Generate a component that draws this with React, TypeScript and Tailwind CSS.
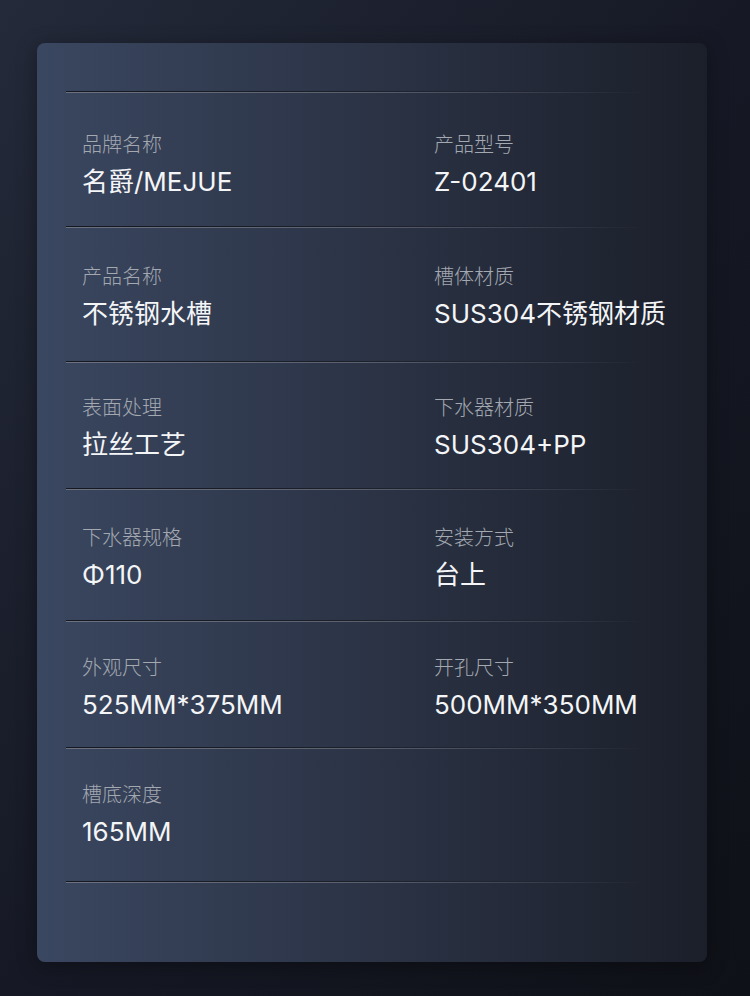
const rows = [
  { pad: 'pt-[40px] h-[133px]', items: [['品牌名称', '名爵/MEJUE'], ['产品型号', 'Z-02401']] },
  { pad: 'pt-[37px] h-[133px]', items: [['产品名称', '不锈钢水槽'], ['槽体材质', 'SUS304不锈钢材质']] },
  { pad: 'pt-[33px] h-[125px]', items: [['表面处理', '拉丝工艺'], ['下水器材质', 'SUS304+PP']] },
  { pad: 'pt-[36px] h-[130px]', items: [['下水器规格', 'Φ110'], ['安装方式', '台上']] },
  { pad: 'pt-[34px] h-[125px]', items: [['外观尺寸', '525MM*375MM'], ['开孔尺寸', '500MM*350MM']] },
  { pad: 'pt-[34px] h-[132px]', items: [['槽底深度', '165MM']] },
];

const Divider = () => (
  <div className="ml-[29px] w-[580px]">
    <div className="h-px bg-gradient-to-r from-[#15181f] via-[#1c2029] to-transparent" />
    <div className="h-px bg-gradient-to-r from-[#6c7282] via-[#5a6070] to-transparent" />
  </div>
);

export default function App() {
  return (
    <div
      className="w-[750px] h-[996px] overflow-hidden bg-gradient-to-br from-[#242a3a] via-[#161925] to-[#0f1118] pt-[43px] pl-[37px]"
      style={{ fontFamily: 'Inter, "Noto Sans CJK SC", sans-serif' }}
    >
      <div className="w-[670px] h-[919px] rounded-[8px] bg-gradient-to-r from-[#3a4760] via-[#2b3345] to-[#1b1f2a] pt-[48px] shadow-[0_4px_20px_rgba(0,0,0,0.35)]">
        <Divider />
        {rows.map((row, i) => (
          <div key={i}>
            <div className={`grid grid-cols-[352px_1fr] pl-[45px] ${row.pad}`}>
              {row.items.map(([label, value]) => (
                <div key={label} className="flex flex-col">
                  <span className="text-[20px] leading-[24px] font-light text-[#a3a8b1]">{label}</span>
                  <span className="mt-[9px] text-[26px] leading-[32px] text-[#f4f5f7]">{value}</span>
                </div>
              ))}
            </div>
            <Divider />
          </div>
        ))}
      </div>
    </div>
  );
}
